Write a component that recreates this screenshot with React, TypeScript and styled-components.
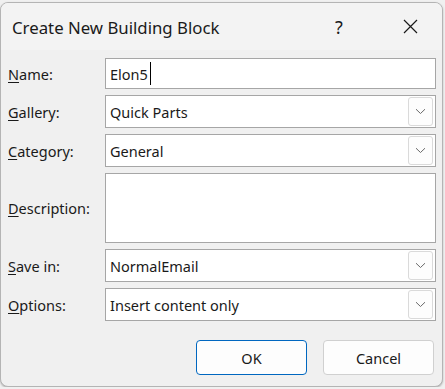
import styled, { createGlobalStyle } from 'styled-components';

const GlobalStyle = createGlobalStyle`
  html, body {
    margin: 0;
    padding: 0;
    background: #f0f0f0;
  }
  body {
    font-family: "Noto Sans", "Open Sans", sans-serif;
    color: #1a1a1a;
  }
`;

const Window = styled.div`
  box-sizing: border-box;
  width: 443px;
  height: 385px;
  margin-top: 2px;
  border: 1px solid #b4b4b4;
  border-radius: 8px;
  background: #f0f0f0;
  box-shadow: 0 1px 2px rgba(0, 0, 0, 0.25);
  overflow: hidden;
  display: flex;
  flex-direction: column;
`;

const TitleBar = styled.div`
  height: 47px;
  display: flex;
  align-items: center;
  background: #f3f3f3;
  padding-left: 11px;
`;

const Title = styled.div`
  flex: 1;
  font-size: 16.8px;
  color: #1a1a1a;
  margin-top: 1px;
`;

const TitleButton = styled.div<{ $w: number }>`
  width: ${(p) => p.$w}px;
  height: 46px;
  display: flex;
  align-items: center;
  justify-content: center;
  font-size: 18px;
  color: #1a1a1a;
`;

const Form = styled.div`
  display: grid;
  grid-template-columns: 97px 1fr;
  row-gap: 6px;
  padding: 8px 6px 0 7px;
`;

const Label = styled.label`
  font-size: 14.5px;
  display: flex;
  align-items: center;
  color: #1a1a1a;

  u {
    text-decoration-thickness: 1px;
    text-underline-offset: 2px;
  }
`;

const Box = styled.div<{ $h: number }>`
  box-sizing: border-box;
  height: ${(p) => p.$h}px;
  border: 1px solid #a6a6a6;
  background: #fff;
  display: flex;
  align-items: center;
  padding: 0 2px 0 4px;
  font-size: 14.5px;
  color: #1a1a1a;
`;

const Value = styled.span`
  flex: 1;
  display: flex;
  align-items: center;
`;

const Caret = styled.span`
  display: inline-block;
  width: 1px;
  height: 23px;
  background: #000;
  margin-left: 2px;
`;

const DropButton = styled.div`
  box-sizing: border-box;
  width: 25px;
  height: 29px;
  border: 1px solid #dadada;
  border-radius: 3px;
  background: #fdfdfd;
  display: flex;
  align-items: center;
  justify-content: center;
`;

const Footer = styled.div`
  display: flex;
  justify-content: flex-end;
  gap: 16px;
  padding: 19px 8px 0 0;
`;

const Button = styled.button<{ $primary?: boolean }>`
  box-sizing: border-box;
  width: 111px;
  height: 35px;
  border-radius: 4px;
  border: 1px solid ${(p) => (p.$primary ? '#0067c0' : '#d0d0d0')};
  background: #fdfdfd;
  font-family: inherit;
  font-size: 14.5px;
  color: #1a1a1a;
  padding: 0;
`;

const Chevron = () => (
  <svg width="11" height="7" viewBox="0 0 11 7">
    <path d="M1 1.2 L5.5 5.5 L10 1.2" fill="none" stroke="#6a6a6a" strokeWidth="1" />
  </svg>
);

const CloseIcon = () => (
  <svg width="15" height="15" viewBox="0 0 15 15">
    <path d="M1 1 L14 14 M14 1 L1 14" stroke="#1a1a1a" strokeWidth="1.2" />
  </svg>
);

const Dropdown = ({ value }: { value: string }) => (
  <Box $h={33}>
    <Value>{value}</Value>
    <DropButton>
      <Chevron />
    </DropButton>
  </Box>
);

export default function App() {
  return (
    <>
      <GlobalStyle />
      <Window>
        <TitleBar>
          <Title>Create New Building Block</Title>
          <TitleButton $w={78}>?</TitleButton>
          <TitleButton $w={64}>
            <CloseIcon />
          </TitleButton>
        </TitleBar>
        <Form>
          <Label>
            <span><u>N</u>ame:</span>
          </Label>
          <Box $h={31}>
            <Value>
              Elon5
              <Caret />
            </Value>
          </Box>

          <Label>
            <span><u>G</u>allery:</span>
          </Label>
          <Dropdown value="Quick Parts" />

          <Label>
            <span><u>C</u>ategory:</span>
          </Label>
          <Dropdown value="General" />

          <Label>
            <span><u>D</u>escription:</span>
          </Label>
          <Box $h={70} />

          <Label>
            <span><u>S</u>ave in:</span>
          </Label>
          <Dropdown value="NormalEmail" />

          <Label>
            <span><u>O</u>ptions:</span>
          </Label>
          <Dropdown value="Insert content only" />
        </Form>
        <Footer>
          <Button $primary>OK</Button>
          <Button>Cancel</Button>
        </Footer>
      </Window>
    </>
  );
}
